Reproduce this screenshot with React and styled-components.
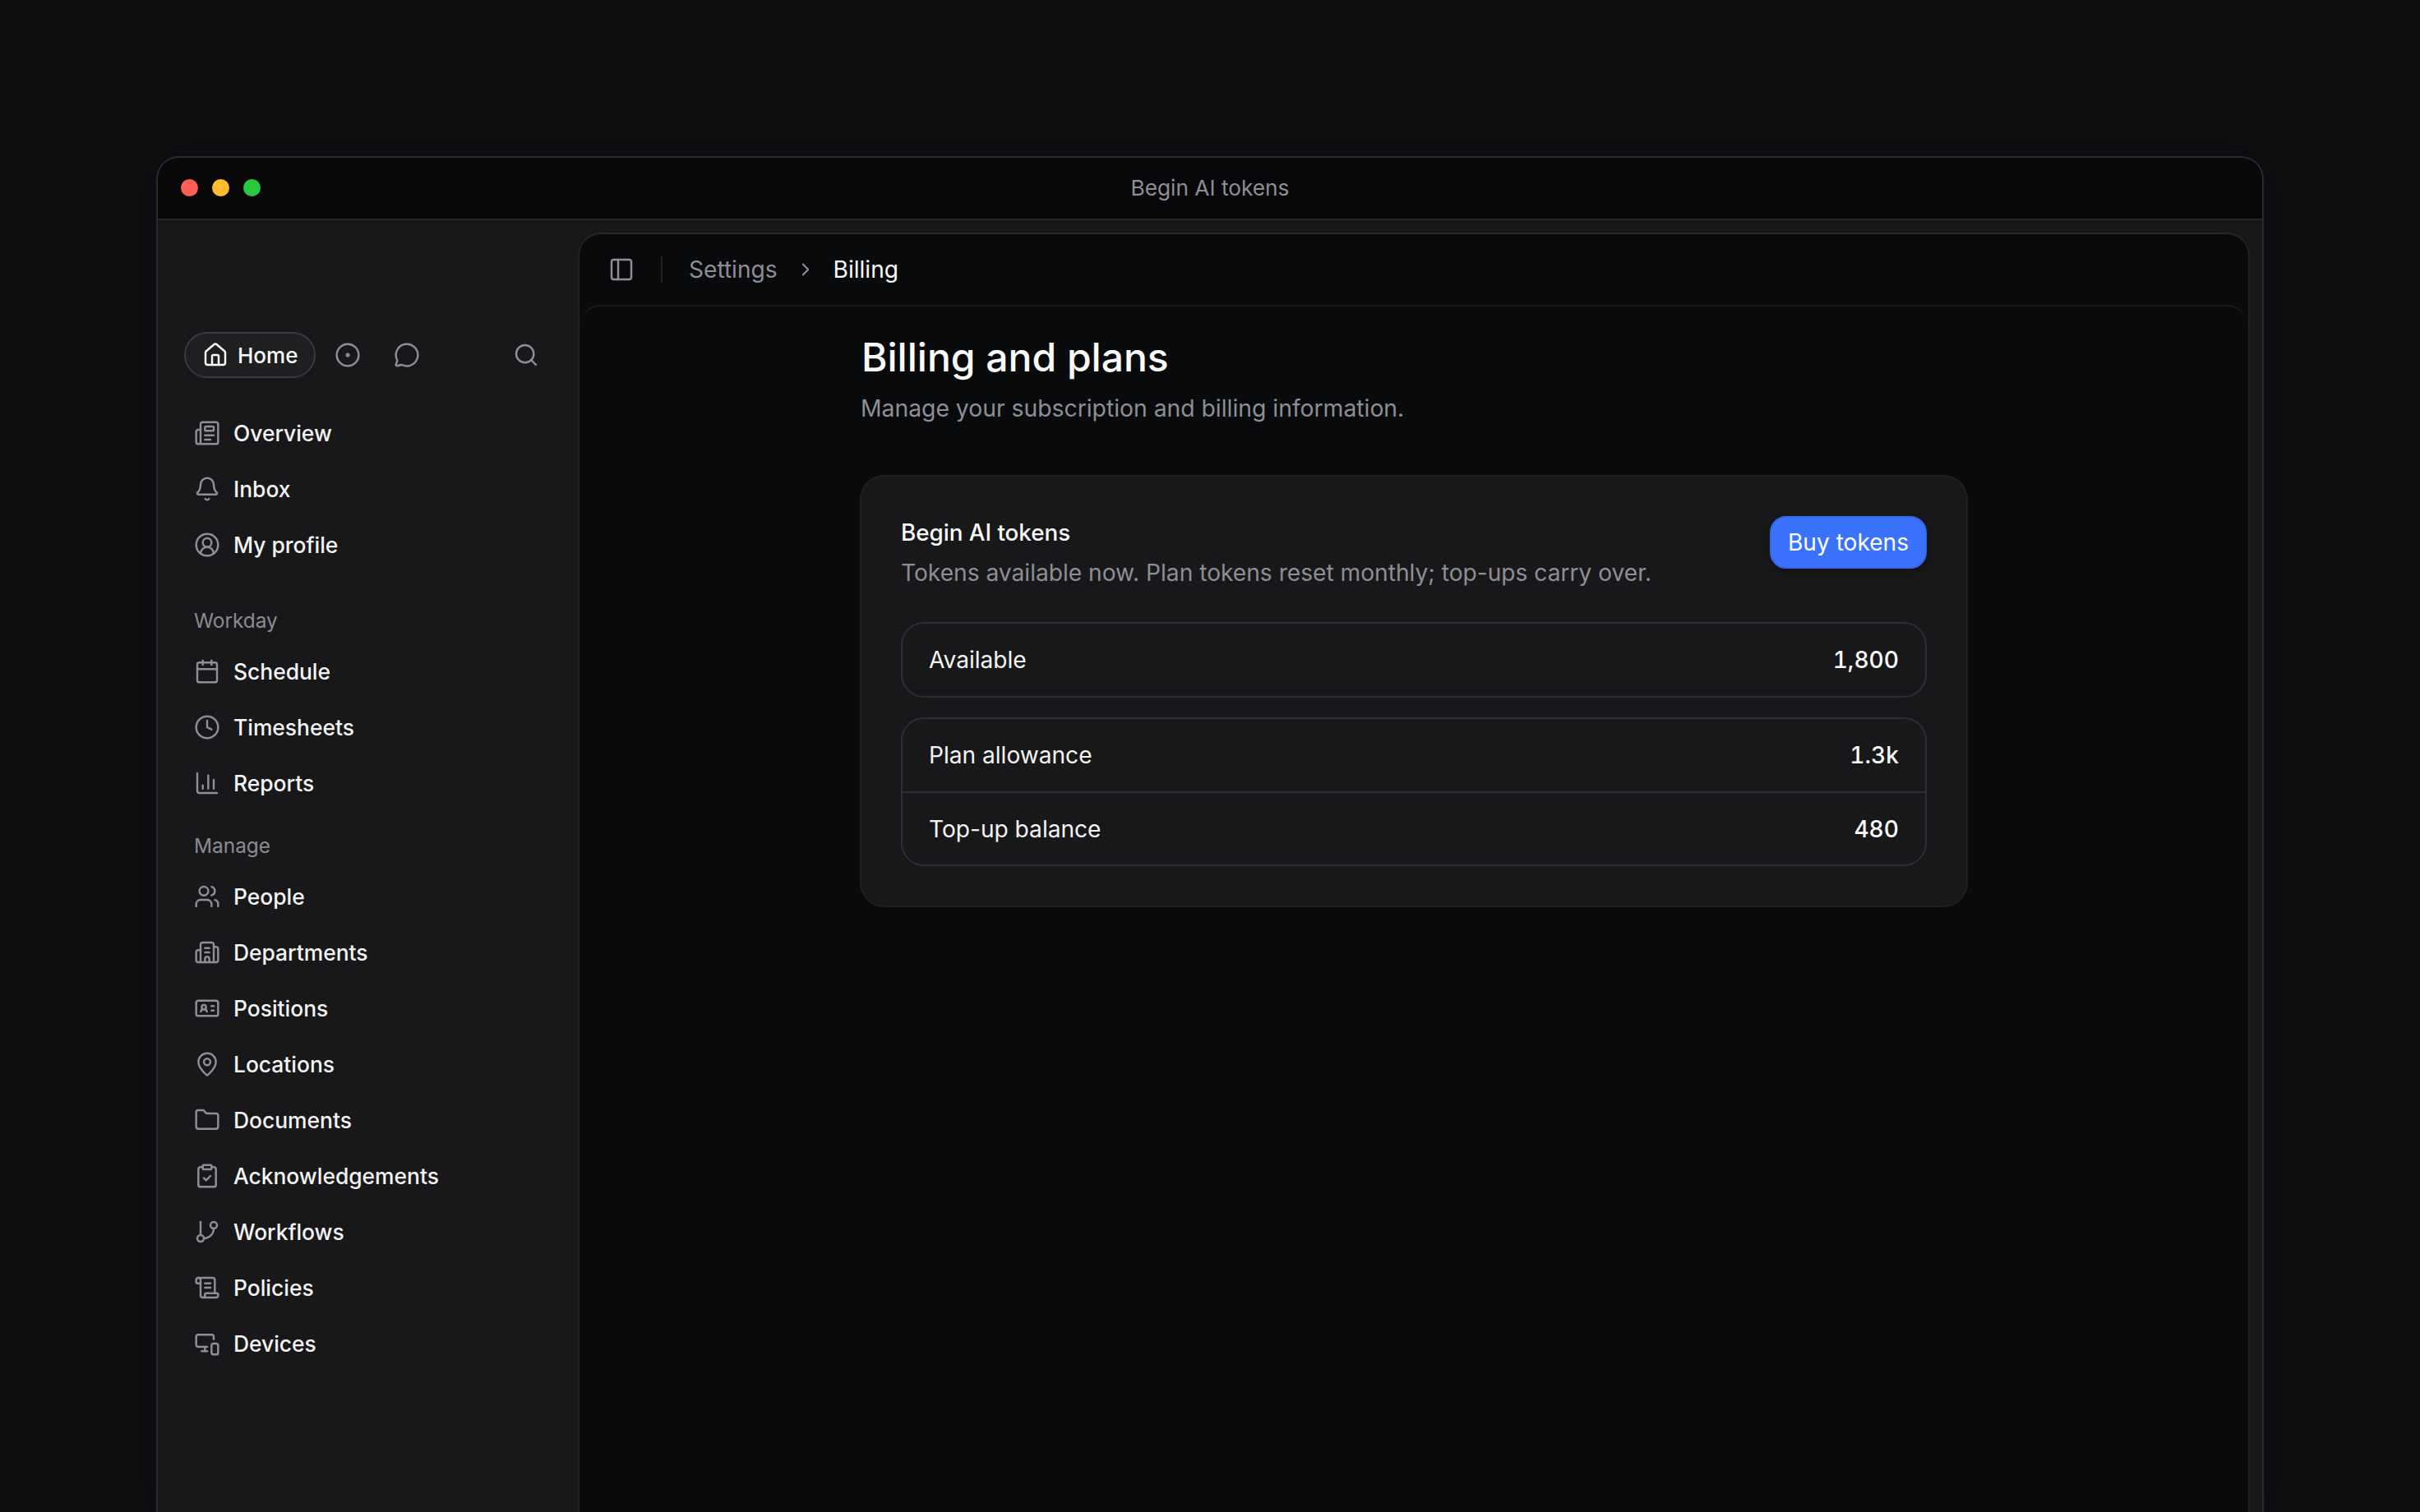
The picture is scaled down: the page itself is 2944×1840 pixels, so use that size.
import React from 'react';
import styled, { createGlobalStyle } from 'styled-components';
import {
  Bell,
  Building2,
  Calendar,
  ChartColumn,
  ChevronRight,
  CircleDot,
  CircleUserRound,
  ClipboardCheck,
  Clock,
  Folder,
  GitBranch,
  House,
  IdCard,
  MapPin,
  MessageCircle,
  MonitorSmartphone,
  Newspaper,
  PanelLeft,
  ScrollText,
  Search,
  Users,
} from 'lucide-react';

const GlobalStyle = createGlobalStyle`
  html, body {
    margin: 0;
    height: 100%;
    overflow: hidden;
    background: #0e0f11;
  }
  * { box-sizing: border-box; }
  body {
    font-family: Inter, "Noto Sans", sans-serif;
    -webkit-font-smoothing: antialiased;
  }
`;

const Page = styled.div`
  width: 2944px;
  height: 1840px;
  padding: 190px 190px 0;
  overflow: hidden;
`;

const Window = styled.div`
  width: 2564px;
  height: 1650px;
  display: flex;
  flex-direction: column;
  background: #18181b;
  border: 2px solid #2a2a2e;
  border-bottom: 0;
  border-radius: 28px 28px 0 0;
  overflow: hidden;
  box-shadow: 0 0 60px rgba(0, 0, 0, 0.35);
`;

const TitleBar = styled.div`
  position: relative;
  flex: none;
  height: 76px;
  display: flex;
  align-items: center;
  justify-content: center;
  background: #08080a;
  border-bottom: 2px solid #232326;
`;

const Lights = styled.div`
  position: absolute;
  left: 28px;
  top: 26px;
  display: flex;
  gap: 17px;
`;

const Light = styled.span`
  width: 21px;
  height: 21px;
  border-radius: 50%;
  background: ${(p) => p.$color};
`;

const WindowTitle = styled.div`
  font-size: 26.25px;
  line-height: 36px;
  color: #8e8e96;
`;

const Body = styled.div`
  flex: 1;
  min-height: 0;
  display: flex;
`;

const Sidebar = styled.aside`
  flex: none;
  width: 511px;
  padding: 136px 0 0 32px;
`;

const TopRow = styled.div`
  display: flex;
  align-items: center;
  height: 56px;
  margin-bottom: 33px;
`;

const HomePill = styled.div`
  width: 160px;
  height: 56px;
  display: flex;
  align-items: center;
  gap: 11px;
  padding-left: 20px;
  border: 2px solid #3a3a3e;
  border-radius: 28px;
  background: #1f1f22;
  color: #fafafa;
  font-size: 26px;
  font-weight: 450;
`;

const TopIcon = styled.span`
  display: flex;
  margin-left: ${(p) => p.$gap}px;
  color: #8e8e96;
`;

const NavGroup = styled.div`
  margin-bottom: ${(p) => p.$after}px;
`;

const GroupLabel = styled.div`
  height: 56px;
  padding-left: 12px;
  display: flex;
  align-items: center;
  font-size: 24.4px;
  font-weight: 400;
  color: #8a8a92;
`;

const NavRow = styled.div`
  height: 68px;
  display: flex;
  align-items: center;
  gap: 16px;
  padding-left: 12px;
  font-size: 26.4px;
  font-weight: 450;
  color: #f4f4f5;
`;

const NavIcon = styled.span`
  display: flex;
  color: #8e8e96;
`;

const Panel = styled.main`
  flex: 1;
  min-width: 0;
  margin: 15px 15px 0 0;
  display: flex;
  flex-direction: column;
  background: #090a0c;
  border: 2px solid #222225;
  border-top-color: #28282b;
  border-bottom: 0;
  border-radius: 28px 28px 0 0;
`;

const PanelHeader = styled.header`
  flex: none;
  height: 86px;
  display: flex;
  align-items: center;
  padding: 0 0 1px 35px;
  font-size: 28.1px;
`;

const Divider = styled.span`
  width: 2px;
  height: 32px;
  margin: 0 32px 0 32px;
  background: #232326;
`;

const Crumb = styled.span`
  color: ${(p) => (p.$current ? '#fafafa' : '#8e8e96')};
`;

const CrumbSep = styled.span`
  display: flex;
  margin: 0 21px;
  color: #8e8e96;
`;

const Content = styled.section`
  flex: 1;
  display: flex;
  flex-direction: column;
  align-items: center;
  padding-top: 27px;
  background: #090a0c;
  border-top: 2px solid #1b1b1e;
  border-radius: 26px 26px 0 0;
`;

const Inner = styled.div`
  width: 1348px;
`;

const Heading = styled.h1`
  margin: 0;
  padding-left: 2px;
  font-size: 48px;
  line-height: 70px;
  font-weight: 500;
  color: #fafafa;
`;

const SubHeading = styled.p`
  margin: 5px 0 59px;
  padding-left: 1px;
  font-size: 28.3px;
  line-height: 44px;
  color: #8e8e96;
`;

const Card = styled.div`
  height: 526px;
  padding: 48px;
  background: #18181b;
  border: 2px solid #202023;
  border-radius: 30px;
`;

const CardTop = styled.div`
  display: flex;
  justify-content: space-between;
  align-items: flex-start;
  margin-bottom: 41px;
`;

const CardTitle = styled.div`
  margin-top: 1px;
  font-size: 27.75px;
  line-height: 38px;
  font-weight: 500;
  color: #fafafa;
`;

const CardDesc = styled.div`
  margin-top: 11px;
  font-size: 28.15px;
  line-height: 38px;
  color: #8e8e96;
`;

const BuyButton = styled.button`
  width: 191px;
  height: 64px;
  padding: 0;
  border: 2px solid #3567e8;
  border-radius: 20px;
  background: #3a72fc;
  color: #ffffff;
  font-family: inherit;
  font-size: 28.1px;
  font-weight: 400;
  box-shadow: 0 2px 8px rgba(0, 0, 0, 0.3);
`;

const StatBox = styled.div`
  margin-top: ${(p) => p.$top}px;
  border: 2px solid #2e2e32;
  border-radius: 28px;
`;

const StatRow = styled.div`
  height: ${(p) => p.$height}px;
  display: flex;
  justify-content: space-between;
  align-items: center;
  padding: 0 32px;
  font-size: 28.1px;
  color: #f4f4f5;
  border-top: ${(p) => (p.$rule ? '2px solid #2e2e32' : '0')};
`;

const StatValue = styled.span`
  font-weight: 450;
  font-variant-numeric: tabular-nums;
  color: #fafafa;
`;

const icon = { size: 32, strokeWidth: 1.85 };

const groups = [
  {
    after: 30,
    items: [
      ['Overview', Newspaper],
      ['Inbox', Bell],
      ['My profile', CircleUserRound],
    ],
  },
  {
    label: 'Workday',
    after: 14,
    items: [
      ['Schedule', Calendar],
      ['Timesheets', Clock],
      ['Reports', ChartColumn],
    ],
  },
  {
    label: 'Manage',
    after: 0,
    items: [
      ['People', Users],
      ['Departments', Building2],
      ['Positions', IdCard],
      ['Locations', MapPin],
      ['Documents', Folder],
      ['Acknowledgements', ClipboardCheck],
      ['Workflows', GitBranch],
      ['Policies', ScrollText],
      ['Devices', MonitorSmartphone],
    ],
  },
];

export default function App() {
  return (
    <Page>
      <GlobalStyle />
      <Window>
        <TitleBar>
          <Lights>
            <Light $color="#ff5f57" />
            <Light $color="#febc2e" />
            <Light $color="#28c840" />
          </Lights>
          <WindowTitle>Begin AI tokens</WindowTitle>
        </TitleBar>
        <Body>
          <Sidebar>
            <TopRow>
              <HomePill>
                <House {...icon} />
                Home
              </HomePill>
              <TopIcon $gap={23}><CircleDot {...icon} /></TopIcon>
              <TopIcon $gap={40}><MessageCircle {...icon} /></TopIcon>
              <TopIcon $gap={113}><Search {...icon} /></TopIcon>
            </TopRow>
            {groups.map((group) => (
              <NavGroup key={group.items[0][0]} $after={group.after}>
                {group.label && <GroupLabel>{group.label}</GroupLabel>}
                {group.items.map(([name, Icon]) => (
                  <NavRow key={name}>
                    <NavIcon><Icon {...icon} /></NavIcon>
                    {name}
                  </NavRow>
                ))}
              </NavGroup>
            ))}
          </Sidebar>
          <Panel>
            <PanelHeader>
              <NavIcon><PanelLeft {...icon} /></NavIcon>
              <Divider />
              <Crumb>Settings</Crumb>
              <CrumbSep><ChevronRight size={26} strokeWidth={1.85} /></CrumbSep>
              <Crumb $current>Billing</Crumb>
            </PanelHeader>
            <Content>
              <Inner>
                <Heading>Billing and plans</Heading>
                <SubHeading>Manage your subscription and billing information.</SubHeading>
                <Card>
                  <CardTop>
                    <div>
                      <CardTitle>Begin AI tokens</CardTitle>
                      <CardDesc>Tokens available now. Plan tokens reset monthly; top-ups carry over.</CardDesc>
                    </div>
                    <BuyButton>Buy tokens</BuyButton>
                  </CardTop>
                  <StatBox $top={0}>
                    <StatRow $height={88}>
                      Available
                      <StatValue>1,800</StatValue>
                    </StatRow>
                  </StatBox>
                  <StatBox $top={24}>
                    <StatRow $height={88}>
                      Plan allowance
                      <StatValue>1.3k</StatValue>
                    </StatRow>
                    <StatRow $height={89} $rule>
                      Top-up balance
                      <StatValue>480</StatValue>
                    </StatRow>
                  </StatBox>
                </Card>
              </Inner>
            </Content>
          </Panel>
        </Body>
      </Window>
    </Page>
  );
}
